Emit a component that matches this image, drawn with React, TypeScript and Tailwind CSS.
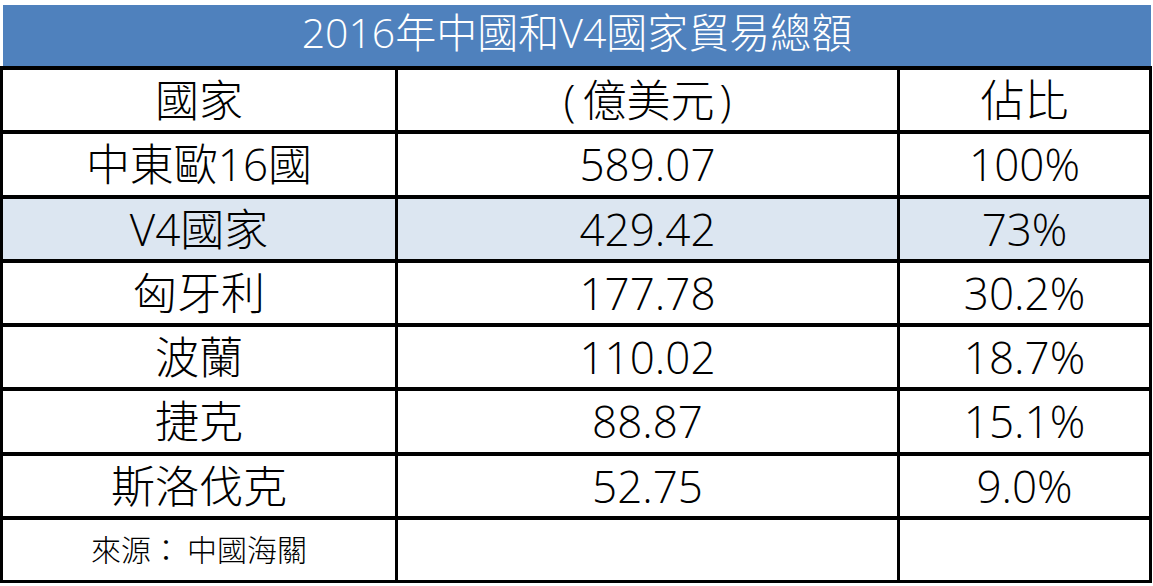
import React from "react";

const rows: [string, string, string, boolean][] = [
  ["中東歐16國", "589.07", "100%", false],
  ["V4國家", "429.42", "73%", true],
  ["匈牙利", "177.78", "30.2%", false],
  ["波蘭", "110.02", "18.7%", false],
  ["捷克", "88.87", "15.1%", false],
  ["斯洛伐克", "52.75", "9.0%", false],
];

const font = { fontFamily: '"Open Sans", "Noto Sans CJK TC", sans-serif' };

export default function App() {
  const cell = "flex items-center justify-center text-[44px] leading-none font-extralight text-black";
  return (
    <div className="w-[1153px] h-[586px] bg-white overflow-hidden" style={font}>
      <div className="ml-[3px] mr-[2px] mt-[5px] h-[61px] bg-[#4f81bd] flex items-center justify-center text-white text-[41px] font-extralight leading-none pb-[6px]">
        2016年中國和V4國家貿易總額
      </div>
      <div className="w-[1152px] h-[517px] bg-black pt-[4px] pl-[3px] pr-[3px] pb-[3px]">
        <div className="grid h-full grid-cols-[392px_499px_249px] grid-rows-[repeat(8,minmax(0,1fr))] gap-x-[3px] gap-y-[4px]">
          <div className={`${cell} bg-white`}>國家</div>
          <div className={`${cell} bg-white`}>
            <span className="mr-[7px]">(</span>億美元<span className="ml-[5px]">)</span>
          </div>
          <div className={`${cell} bg-white`}>佔比</div>
          {rows.map(([a, b, c, hl]) => (
            <React.Fragment key={a}>
              <div className={`${cell} ${hl ? "bg-[#dce6f1]" : "bg-white"}`}>{a}</div>
              <div className={`${cell} ${hl ? "bg-[#dce6f1]" : "bg-white"}`}>{b}</div>
              <div className={`${cell} ${hl ? "bg-[#dce6f1]" : "bg-white"}`}>{c}</div>
            </React.Fragment>
          ))}
          <div className="flex items-center justify-center bg-white text-[30px] font-extralight leading-none text-black">
            來源：<span className="ml-[6px]">中國海關</span>
          </div>
          <div className="bg-white" />
          <div className="bg-white" />
        </div>
      </div>
    </div>
  );
}
